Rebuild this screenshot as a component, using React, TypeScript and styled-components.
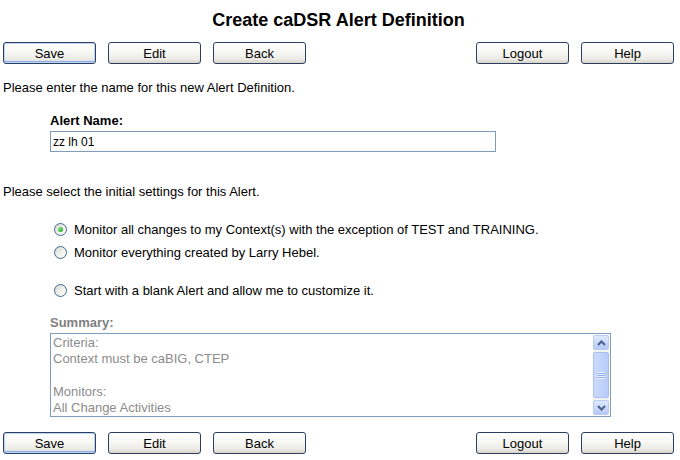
import styled, { createGlobalStyle } from 'styled-components';

const GlobalStyle = createGlobalStyle`
  html, body {
    margin: 0;
    padding: 0;
    background: #fff;
  }
  body {
    font-family: "Liberation Sans", Arial, sans-serif;
    font-size: 13px;
    color: #000;
  }
`;

const actions = ['Save', 'Edit', 'Back'];
const account = ['Logout', 'Help'];

const options = [
  { label: 'Monitor all changes to my Context(s) with the exception of TEST and TRAINING.', checked: true, gap: 19 },
  { label: 'Monitor everything created by Larry Hebel.', checked: false, gap: 3 },
  { label: 'Start with a blank Alert and allow me to customize it.', checked: false, gap: 18 },
];

const summaryLines = ['Criteria:', 'Context must be caBIG, CTEP', '', 'Monitors:', 'All Change Activities'];

function ButtonRow({ top }: { top: number }) {
  return (
    <ButtonBar $top={top}>
      <ButtonGroup>
        {actions.map((name, idx) => (
          <XpButton key={name} $default={idx === 0 && top < 20}>{name}</XpButton>
        ))}
      </ButtonGroup>
      <ButtonGroup>
        {account.map((name) => (
          <XpButton key={name}>{name}</XpButton>
        ))}
      </ButtonGroup>
    </ButtonBar>
  );
}

function Chevron({ up }: { up?: boolean }) {
  return (
    <svg width="9" height="6" viewBox="0 0 9 6">
      <polyline
        points={up ? '1,5 4.5,1.5 8,5' : '1,1 4.5,4.5 8,1'}
        fill="none"
        stroke="#4d6185"
        strokeWidth="2"
      />
    </svg>
  );
}

export default function App() {
  return (
    <>
      <GlobalStyle />
      <Page>
        <Title>Create caDSR Alert Definition</Title>
        <ButtonRow top={12} />

        <Text $top={16}>Please enter the name for this new Alert Definition.</Text>

        <Field $top={17}>
          <FieldLabel>Alert Name:</FieldLabel>
          <NameInput defaultValue="zz lh 01" />
        </Field>

        <Text $top={32}>Please select the initial settings for this Alert.</Text>

        <OptionList>
          {options.map((opt) => (
            <OptionRow key={opt.label} $top={opt.gap}>
              <Radio $checked={opt.checked} />
              <span>{opt.label}</span>
            </OptionRow>
          ))}
        </OptionList>

        <Field $top={15}>
          <FieldLabel $muted>Summary:</FieldLabel>
          <SummaryBox>
            <SummaryText>
              {summaryLines.map((line, idx) => (
                <SummaryLine key={idx}>{line || '\u00a0'}</SummaryLine>
              ))}
            </SummaryText>
            <ScrollBar>
              <ScrollArrow><Chevron up /></ScrollArrow>
              <ScrollThumb>
                <Grip />
              </ScrollThumb>
              <ScrollArrow><Chevron /></ScrollArrow>
            </ScrollBar>
          </SummaryBox>
        </Field>

        <ButtonRow top={15} />
      </Page>
    </>
  );
}

const Page = styled.div`
  width: 680px;
  height: 460px;
  box-sizing: border-box;
  padding: 0 6px 0 3px;
  overflow: hidden;
`;

const Title = styled.h1`
  margin: 0;
  padding-top: 10px;
  height: 20px;
  line-height: 20px;
  text-align: center;
  font-size: 18px;
  font-weight: bold;
`;

const ButtonBar = styled.div<{ $top: number }>`
  display: flex;
  justify-content: space-between;
  margin-top: ${(p) => p.$top}px;
  height: 22px;
`;

const ButtonGroup = styled.div`
  display: flex;
  gap: 12px;
`;

const XpButton = styled.button<{ $default?: boolean }>`
  width: 93px;
  height: 22px;
  padding: 0;
  font-family: "Liberation Sans", Arial, sans-serif;
  font-size: 13px;
  color: #000;
  border: 1px solid #2d3f5e;
  border-radius: 3px;
  background: linear-gradient(180deg, #ffffff 0%, #f7f7f4 45%, #ecebe6 80%, #d6d3cb 100%);
  box-shadow: ${(p) => (p.$default ? 'inset 0 0 0 1px #bcd4f6, inset 0 -1px 0 1px #8eb0ec' : 'none')};
  cursor: pointer;
`;

const Text = styled.p<{ $top: number }>`
  margin: ${(p) => p.$top}px 0 0;
  line-height: 16px;
`;

const Field = styled.div<{ $top: number }>`
  margin: ${(p) => p.$top}px 0 0 47px;
  display: flex;
  flex-direction: column;
  gap: 2px;
`;

const FieldLabel = styled.div<{ $muted?: boolean }>`
  font-weight: bold;
  line-height: 16px;
  color: ${(p) => (p.$muted ? '#808080' : '#000')};
`;

const NameInput = styled.input`
  width: 446px;
  height: 21px;
  box-sizing: border-box;
  border: 1px solid #7f9db9;
  padding: 0 2px;
  font-family: "Liberation Sans", Arial, sans-serif;
  font-size: 12px;
  color: #000;
  outline: none;
`;

const OptionList = styled.div`
  margin-left: 51px;
  display: flex;
  flex-direction: column;
`;

const OptionRow = styled.label<{ $top: number }>`
  display: flex;
  align-items: center;
  gap: 7px;
  height: 20px;
  margin-top: ${(p) => p.$top}px;
`;

const Radio = styled.span<{ $checked?: boolean }>`
  position: relative;
  width: 13px;
  height: 13px;
  box-sizing: border-box;
  border-radius: 50%;
  border: 1px solid #3d6a94;
  background: linear-gradient(135deg, #d6d6d0 0%, #efefeb 50%, #ffffff 100%);
  flex-shrink: 0;

  &::after {
    content: '';
    display: ${(p) => (p.$checked ? 'block' : 'none')};
    position: absolute;
    left: 3px;
    top: 3px;
    width: 5px;
    height: 5px;
    border-radius: 50%;
    background: radial-gradient(circle at 35% 35%, #8ee58a 0%, #38b534 60%, #21a121 100%);
  }
`;

const SummaryBox = styled.div`
  width: 561px;
  height: 84px;
  box-sizing: border-box;
  border: 1px solid #7f9db9;
  display: flex;
  background: #fff;
`;

const SummaryText = styled.div`
  flex: 1;
  padding: 1px 2px;
  color: #8c8c8c;
  overflow: hidden;
`;

const SummaryLine = styled.div`
  line-height: 16.3px;
  white-space: nowrap;
`;

const ScrollBar = styled.div`
  width: 16px;
  margin: 1px 1px 1px 0;
  display: flex;
  flex-direction: column;
  gap: 1px;
  background: #f4f3ee;
`;

const ScrollArrow = styled.div`
  height: 15px;
  box-sizing: border-box;
  border: 1px solid #b8cbf2;
  border-radius: 2px;
  background: linear-gradient(180deg, #e1eafe 0%, #c5d5fc 60%, #b4c8f6 100%);
  display: flex;
  align-items: center;
  justify-content: center;
`;

const ScrollThumb = styled.div`
  flex: 1;
  margin: 1px 0;
  box-sizing: border-box;
  border: 1px solid #a9bff4;
  border-radius: 2px;
  background: linear-gradient(90deg, #cbd9fc 0%, #c2d3fc 50%, #b8cbf8 100%);
  display: flex;
  align-items: center;
  justify-content: center;
`;

const Grip = styled.div`
  width: 7px;
  height: 7px;
  background: repeating-linear-gradient(180deg, #eef4fe 0 1px, #8faaf0 1px 2px);
`;
